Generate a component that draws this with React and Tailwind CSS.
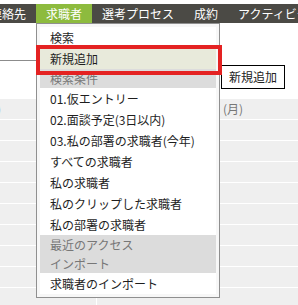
import React from 'react';

const tabs = [
  { label: '連絡先' },
  { label: '求職者', active: true },
  { label: '選考プロセス' },
  { label: '成約' },
  { label: 'アクティビティ' },
];

const menu = [
  { label: '検索' },
  { label: '新規追加', hover: true },
  { label: '検索条件', header: true },
  { label: '01.仮エントリー' },
  { label: '02.面談予定(3日以内)' },
  { label: '03.私の部署の求職者(今年)' },
  { label: 'すべての求職者' },
  { label: '私の求職者' },
  { label: '私のクリップした求職者' },
  { label: '私の部署の求職者' },
  { label: '最近のアクセス', header: true },
  { label: 'インポート', header: true },
  { label: '求職者のインポート' },
];

function App() {
  const rows = Array.from({ length: 10 }, (_, i) => i);

  return (
    <div
      className="relative w-[298px] h-[305px] overflow-hidden bg-white text-[12px]"
      style={{ fontFamily: '"Noto Sans CJK JP", "Liberation Sans", sans-serif' }}
    >
      {/* Top nav */}
      <div className="h-[4px] bg-white"></div>
      <div className="flex h-[19px] bg-[#4b4a45] whitespace-nowrap">
        {tabs.map((t, i) => (
          <div
            key={t.label}
            className={`flex items-center px-[10px] leading-[19px] text-white shrink-0 ${
              t.active ? 'bg-[#8dbb3e]' : ''
            } ${i === 0 ? 'ml-[-20px]' : ''}`}
          >
            {t.label}
          </div>
        ))}
      </div>

      {/* Page content under the menu */}
      <div className="flex h-[76px]">
        <div className="w-[221px] h-[38px] border-b border-[#8c8c8c] shrink-0"></div>
        <div className="pt-[42px]">
          <button className="h-[24px] px-[7px] border border-black bg-white text-[#222] leading-[22px] whitespace-nowrap">
            新規追加
          </button>
        </div>
      </div>
      <div>
        {rows.map(i => (
          <div key={i} className="flex h-[21px] border-b border-white bg-[#efefef] text-[#777] leading-[20px]">
            <div className="w-[97px] border-r border-white shrink-0">
              {i === 0 && <span className="ml-[-3px]">)</span>}
            </div>
            <div className="w-[124px] shrink-0"></div>
            <div className="pl-[2px]">{i === 0 && '(月)'}</div>
          </div>
        ))}
      </div>

      {/* Dropdown menu */}
      <div className="absolute left-[36px] top-[23px] w-[184px] border border-[#8f8f8f] bg-[#f7f7f7] p-[3px]">
        <div className="bg-white">
          {menu.map(m => (
            <div
              key={m.label}
              className={`pl-[10px] whitespace-nowrap ${
                m.header
                  ? 'h-[19px] leading-[19px] bg-[#dcdcdc] text-[#777]'
                  : 'h-[21px] leading-[21px] text-[#1e1e1e]'
              } ${m.hover ? 'bg-[#e8eadb]' : ''}`}
            >
              {m.label}
            </div>
          ))}
        </div>
      </div>

      {/* Red highlight annotation */}
      <div className="absolute left-[36px] top-[45px] w-[186px] h-[30px] border-4 border-[#e42222]"></div>
    </div>
  );
}

export default App;
